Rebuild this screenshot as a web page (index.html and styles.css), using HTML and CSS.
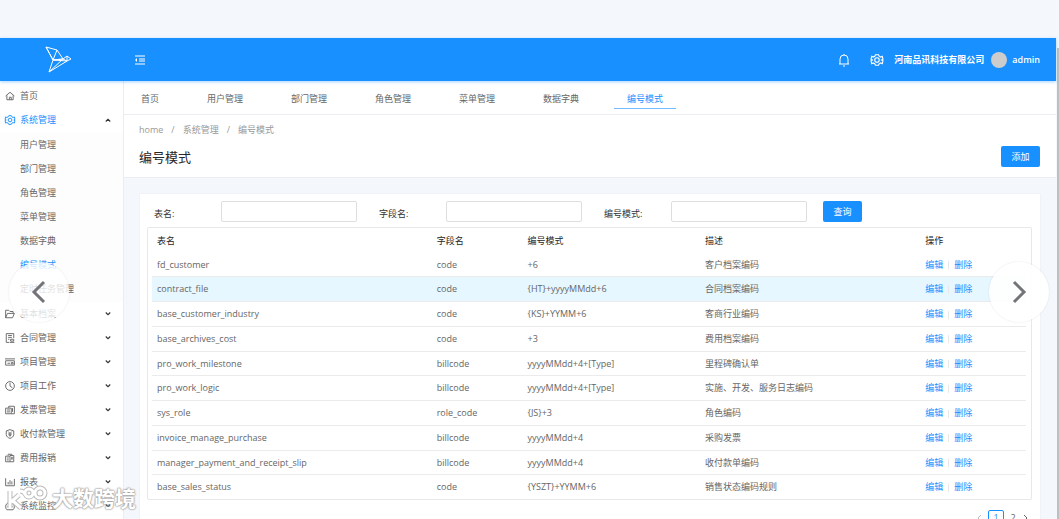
FILE: index.html
```html
<!DOCTYPE html>
<html lang="zh-CN">
<head>
    <meta charset="UTF-8">
    <meta name="viewport" content="width=device-width, initial-scale=1.0">
    <title>编号模式</title>
    <link rel="stylesheet" href="styles.css">
</head>
<body>
    <div class="app">
        <header class="header">
            <a class="logo" href="#" aria-label="home">
                <svg width="27" height="28" viewBox="0 0 27 28"><path d="M1 1l11 3 6 9-10 1zM8 14l10-1-14 13zM12 4L8 14M18 13l4-3 4 3-4 2-18 11M8 14l14 1M18 13l4 2v-5M1 1l7 13"/></svg>
            </a>
            <button class="fold" aria-label="fold">
                <svg width="12" height="12" viewBox="0 0 12 12"><path d="M1 2h10M5 5h6M5 7h6M1 10h10"/><path class="solid" d="M1 6l2-2v4z"/></svg>
            </button>
            <div class="user-bar">
                <button aria-label="notice">
                    <svg width="12" height="14" viewBox="0 0 12 14"><path d="M1 11h10M2 11V6a4 4 0 0 1 8 0v5M6 2V1M5 13h2"/></svg>
                </button>
                <button aria-label="setting">
                    <svg class="gear" width="12" height="12" viewBox="0 0 16 16"><use href="#gear"/></svg>
                </button>
                <span class="company">河南品讯科技有限公司</span>
                <span class="avatar"></span>
                <span class="name">admin</span>
            </div>
        </header>
        <div class="body">
            <nav class="sidebar">
                <a href="#"><svg class="icon" viewBox="0 0 16 16"><path d="M1 8l7-6 7 6M3 7v7h10V7M7 14v-4h3v4"/></svg>首页</a>
                <a class="active" href="#"><svg class="icon" viewBox="0 0 16 16"><g id="gear"><path d="M6 1h4l1 2 2 1 2-1 1 4-2 1 2 1-1 4-2-1-2 1-1 2H6l-1-2-2-1-2 1-1-4 2-1-2-1 1-4 2 1 2-1z"/><circle cx="8" cy="8" r="3"/></g></svg>系统管理<svg class="arrow up" viewBox="0 0 8 8"><path d="M1 2l3 3 3-3"/></svg></a>
                <div class="submenu">
                    <a href="#">用户管理</a>
                    <a href="#">部门管理</a>
                    <a href="#">角色管理</a>
                    <a href="#">菜单管理</a>
                    <a href="#">数据字典</a>
                    <a class="active" href="#">编号模式</a>
                    <a href="#">定时任务管理</a>
                </div>
                <a href="#"><svg class="icon" viewBox="0 0 16 16"><path d="M1 14V2h5l2 2h5v3M1 14h11l3-7H4z"/></svg>基本档案<svg class="arrow" viewBox="0 0 8 8"><path d="M1 2l3 3 3-3"/></svg></a>
                <a href="#"><svg class="icon" viewBox="0 0 16 16"><path d="M14 8V1H2v14h5M5 4h6M5 7h6M5 10h2M9 10h5v3H9zM8 15h7"/></svg>合同管理<svg class="arrow" viewBox="0 0 8 8"><path d="M1 2l3 3 3-3"/></svg></a>
                <a href="#"><svg class="icon" viewBox="0 0 16 16"><path d="M0 3h16M1 6h14M1 6v7h14V6M4 10h4M10 9h3v2h-3z"/></svg>项目管理<svg class="arrow" viewBox="0 0 8 8"><path d="M1 2l3 3 3-3"/></svg></a>
                <a href="#"><svg class="icon" viewBox="0 0 16 16"><circle cx="8" cy="8" r="7"/><path d="M8 3v5l4 3"/></svg>项目工作<svg class="arrow" viewBox="0 0 8 8"><path d="M1 2l3 3 3-3"/></svg></a>
                <a href="#"><svg class="icon" viewBox="0 0 16 16"><path d="M6 5V2h9v12H1V5h9v9M3 8h5M3 11h5M12 5v6"/></svg>发票管理<svg class="arrow" viewBox="0 0 8 8"><path d="M1 2l3 3 3-3"/></svg></a>
                <a href="#"><svg class="icon" viewBox="0 0 16 16"><path d="M8 1l6 2v6c0 3-3 5-6 6-3-1-6-3-6-6V3zM5 4l3 3 3-3M8 7v5M5 8h6M6 10h4"/></svg>收付款管理<svg class="arrow" viewBox="0 0 8 8"><path d="M1 2l3 3 3-3"/></svg></a>
                <a href="#"><svg class="icon" viewBox="0 0 16 16"><path d="M5 4V2h6v2M1 5h7v9H1zM8 4h6v10H8M3 8h3M3 11h3M11 6v5M10 8h3"/></svg>费用报销<svg class="arrow" viewBox="0 0 8 8"><path d="M1 2l3 3 3-3"/></svg></a>
                <a href="#"><svg class="icon" viewBox="0 0 16 16"><path d="M1 2v12h14V3M5 12V8M8 12V5M11 12V7"/></svg>报表<svg class="arrow" viewBox="0 0 8 8"><path d="M1 2l3 3 3-3"/></svg></a>
                <a href="#"><svg class="icon" viewBox="0 0 16 16"><path d="M3 14a7 7 0 1 1 10 0zM8 9l3-4M3 9h1M12 9h1M8 3v1"/></svg>系统监控<svg class="arrow" viewBox="0 0 8 8"><path d="M1 2l3 3 3-3"/></svg></a>
            </nav>
            <main class="content">
                <nav class="tabs">
                    <a href="#">首页</a>
                    <a href="#">用户管理</a>
                    <a href="#">部门管理</a>
                    <a href="#">角色管理</a>
                    <a href="#">菜单管理</a>
                    <a href="#">数据字典</a>
                    <a class="active" href="#">编号模式</a>
                </nav>
                <section class="page-header">
                    <div class="breadcrumb"><a href="#">home</a><span>/</span><a href="#">系统管理</a><span>/</span><a href="#">编号模式</a></div>
                    <div class="title-row">
                        <h1>编号模式</h1>
                        <button class="btn">添加</button>
                    </div>
                </section>
                <section class="card">
                    <form class="search">
                        <div class="field"><label for="table-name">表名:</label><input id="table-name" type="text"></div>
                        <div class="field"><label for="field-name">字段名:</label><input id="field-name" type="text"></div>
                        <div class="field"><label for="code-mode">编号模式:</label><input id="code-mode" type="text"></div>
                        <div class="action"><button class="btn" type="button">查询</button></div>
                    </form>
                    <div class="table-box">
                        <table>
                            <thead>
                                <tr><th class="col-table">表名</th><th class="col-field">字段名</th><th class="col-mode">编号模式</th><th class="col-desc">描述</th><th>操作</th></tr>
                            </thead>
                            <tbody>
                                <tr><td>fd_customer</td><td>code</td><td>+6</td><td>客户档案编码</td><td><a href="#">编辑</a><i></i><a href="#">删除</a></td></tr>
                                <tr class="hover"><td>contract_file</td><td>code</td><td>{HT}+yyyyMMdd+6</td><td>合同档案编码</td><td><a href="#">编辑</a><i></i><a href="#">删除</a></td></tr>
                                <tr><td>base_customer_industry</td><td>code</td><td>{KS}+YYMM+6</td><td>客商行业编码</td><td><a href="#">编辑</a><i></i><a href="#">删除</a></td></tr>
                                <tr><td>base_archives_cost</td><td>code</td><td>+3</td><td>费用档案编码</td><td><a href="#">编辑</a><i></i><a href="#">删除</a></td></tr>
                                <tr><td>pro_work_milestone</td><td>billcode</td><td>yyyyMMdd+4+[Type]</td><td>里程碑确认单</td><td><a href="#">编辑</a><i></i><a href="#">删除</a></td></tr>
                                <tr><td>pro_work_logic</td><td>billcode</td><td>yyyyMMdd+4+[Type]</td><td>实施、开发、服务日志编码</td><td><a href="#">编辑</a><i></i><a href="#">删除</a></td></tr>
                                <tr><td>sys_role</td><td>role_code</td><td>{JS}+3</td><td>角色编码</td><td><a href="#">编辑</a><i></i><a href="#">删除</a></td></tr>
                                <tr><td>invoice_manage_purchase</td><td>billcode</td><td>yyyyMMdd+4</td><td>采购发票</td><td><a href="#">编辑</a><i></i><a href="#">删除</a></td></tr>
                                <tr><td>manager_payment_and_receipt_slip</td><td>billcode</td><td>yyyyMMdd+4</td><td>收付款单编码</td><td><a href="#">编辑</a><i></i><a href="#">删除</a></td></tr>
                                <tr><td>base_sales_status</td><td>code</td><td>{YSZT}+YYMM+6</td><td>销售状态编码规则</td><td><a href="#">编辑</a><i></i><a href="#">删除</a></td></tr>
                            </tbody>
                        </table>
                    </div>
                    <div class="pagination">
                        <button class="disabled" aria-label="prev"><svg width="6" height="8" viewBox="0 0 6 8"><path d="M5 1L2 4l3 3"/></svg></button>
                        <button class="current">1</button>
                        <button>2</button>
                        <button aria-label="next"><svg width="6" height="8" viewBox="0 0 6 8"><path d="M1 1l3 3-3 3"/></svg></button>
                    </div>
                </section>
            </main>
        </div>
    </div>
    <div class="scrollbar"></div>
    <button class="slide prev" aria-label="previous slide"><svg width="16" height="24" viewBox="0 0 16 24"><path d="M13 2L3 12l10 10"/></svg></button>
    <button class="slide next" aria-label="next slide"><svg width="16" height="24" viewBox="0 0 16 24"><path d="M3 2l10 10L3 22"/></svg></button>
    <div class="watermark">
        <svg width="42" height="26" viewBox="0 0 42 26">
            <g class="edge"><path d="M3 6v17M4 17l8-7M6 16l8 7"/><circle cx="22" cy="8" r="4"/><circle cx="33" cy="8" r="5"/><path d="M13 6c2 0 4 1 5 3"/></g>
            <g class="face"><path d="M3 6v17M4 17l8-7M6 16l8 7"/><circle cx="22" cy="8" r="4"/><circle cx="33" cy="8" r="5"/><path d="M13 6c2 0 4 1 5 3"/></g>
        </svg>
        <span>大数跨境</span>
    </div>
</body>
</html>
```
FILE: styles.css
```css
* {
    box-sizing: border-box;
}
body {
    margin: 0;
    height: 100vh;
    overflow: hidden;
    position: relative;
    background: #f4f7fc;
    font-family: "Open Sans", "Noto Sans CJK SC", sans-serif;
    font-size: 9px;
    line-height: 14px;
    color: #666;
}
a {
    color: inherit;
    text-decoration: none;
}
button, input {
    font: inherit;
    padding: 0;
}
button {
    border: none;
    background: none;
    color: inherit;
}
svg {
    display: block;
    fill: none;
    stroke: currentColor;
}
.app {
    display: flex;
    flex-direction: column;
    height: 100%;
    padding-top: 38px;
    margin-right: 3px;
}
.header {
    display: flex;
    align-items: center;
    flex-shrink: 0;
    height: 43px;
    padding-right: 16px;
    background: #1890ff;
    color: #fff;
    box-shadow: 0 1px 3px rgba(24, 144, 255, 0.4);
    z-index: 1;
}
.logo {
    width: 124px;
    padding-left: 45px;
}
.fold {
    margin-left: 10px;
}
.fold .solid {
    fill: currentColor;
    stroke: none;
}
.user-bar {
    display: flex;
    align-items: center;
    margin-left: auto;
    font-weight: 600;
}
.user-bar button {
    margin-right: 21px;
}
.user-bar button + button {
    margin-right: 11px;
}
.gear {
    overflow: visible;
    stroke-width: 1.5;
}
.avatar {
    width: 16px;
    height: 16px;
    margin: 0 5px 0 7px;
    border-radius: 50%;
    background: #ccc;
}
.body {
    display: flex;
    flex: 1;
    min-height: 0;
}
.sidebar {
    width: 124px;
    flex-shrink: 0;
    padding-top: 3px;
    overflow: hidden;
    background: #fff;
    border-right: 1px solid #ebedf0;
}
.sidebar a {
    display: flex;
    align-items: center;
    height: 24px;
    padding: 0 12px 0 5px;
}
.sidebar .active {
    color: #1890ff;
}
.icon {
    width: 10px;
    height: 10px;
    margin-right: 5px;
    overflow: visible;
    stroke-width: 1.5;
}
.arrow {
    width: 6px;
    height: 6px;
    margin-left: auto;
    color: #333;
    stroke-width: 1.5;
}
.arrow.up {
    transform: rotate(180deg);
}
.submenu {
    padding: 1px 0;
    background: #fdfdfd;
}
.submenu a {
    padding-left: 20px;
}
.content {
    flex: 1;
    min-width: 0;
}
.tabs {
    display: flex;
    gap: 22px;
    height: 34px;
    padding: 4px;
    border-bottom: 1px solid #ebedf0;
    background: #fff;
}
.tabs a {
    height: 24px;
    padding: 7px 13px 0;
}
.tabs .active {
    color: #1890ff;
    border-bottom: 1px solid #74bcff;
}
.page-header {
    padding: 8px 16px 10px 15px;
    background: #fff;
    border-bottom: 1px solid #ebedf0;
}
.breadcrumb {
    color: #999;
}
.breadcrumb span {
    margin: 0 8px;
}
.title-row {
    display: flex;
    align-items: center;
    justify-content: space-between;
    margin-top: 9px;
}
h1 {
    margin: 0;
    font-size: 13px;
    line-height: 20px;
    font-weight: 400;
    color: #262626;
}
.btn {
    width: 39px;
    height: 21px;
    border-radius: 2px;
    background: #1890ff;
    color: #fff;
}
.card {
    margin: 16px 16px 0;
    padding-top: 7px;
    background: #fff;
    height: 100%;
    box-shadow: 0 0 1px #d8dce2;
}
.search {
    display: grid;
    grid-template-columns: repeat(4, 1fr);
    margin-bottom: 5px;
}
.field {
    display: flex;
    padding: 0 8px 0 14px;
}
.field label {
    width: 67px;
    padding-top: 6px;
    color: #333;
}
.field input {
    flex: 1;
    min-width: 0;
    height: 21px;
    border: 1px solid #dedede;
    border-radius: 2px;
}
.action {
    padding-left: 8px;
}
.table-box {
    margin: 0 8px 0 7px;
    padding: 0 5px 0 4px;
    border: 1px solid #e8e8e8;
    border-radius: 2px;
}
table {
    width: 100%;
    height: 271px;
    table-layout: fixed;
    border-collapse: collapse;
}
th, td {
    padding: 0 5px;
    text-align: left;
    border-bottom: 1px solid #ebebeb;
}
th {
    height: 25px;
    font-weight: 400;
    color: #262626;
    border-bottom: none;
}
tr:last-child td {
    border-bottom: none;
}
.col-table {
    width: 32%;
}
.col-field {
    width: 10.4%;
}
.col-mode {
    width: 20.3%;
}
.col-desc {
    width: 25.2%;
}
.hover {
    background: #e6f7ff;
}
td a {
    color: #1890ff;
}
td i {
    display: inline-block;
    width: 1px;
    height: 8px;
    margin: 0 5px;
    vertical-align: middle;
    background: #e8e8e8;
}
.pagination {
    display: flex;
    justify-content: flex-end;
    gap: 5px;
    margin: 10px 10px 0 0;
}
.pagination button {
    display: flex;
    align-items: center;
    justify-content: center;
    min-width: 8px;
    height: 15px;
}
.pagination .current {
    width: 16px;
    border: 1px solid #1890ff;
    border-radius: 2px;
    color: #1890ff;
}
.pagination .disabled {
    color: #bbb;
}
/* scrollbar, carousel arrows and watermark lie over the page */
.scrollbar {
    position: absolute;
    top: 48px;
    right: 0;
    bottom: 0;
    width: 2px;
    background: #bfbfbf;
}
.slide {
    position: absolute;
    top: 262px;
    display: flex;
    align-items: center;
    justify-content: center;
    width: 60px;
    height: 60px;
    border-radius: 50%;
    background: rgba(255, 255, 255, 0.8);
    box-shadow: 0 0 2px rgba(0, 0, 0, 0.12);
    color: #737378;
    z-index: 2;
}
.slide svg {
    stroke-width: 3;
}
.prev {
    left: 9px;
}
.next {
    right: 10px;
    background: rgba(255, 255, 255, 0.9);
}
.watermark {
    position: absolute;
    left: 7px;
    bottom: 8px;
    display: flex;
    align-items: center;
    gap: 3px;
    font-size: 21px;
    line-height: 26px;
    font-weight: 700;
    color: #fff;
    text-shadow: 0 0 2px #999, 0 0 2px #999, 0 0 1px #aaa;
    z-index: 3;
}
.watermark .edge {
    stroke: #bbb;
    stroke-width: 5;
}
.watermark .face {
    stroke: #fff;
    stroke-width: 3;
}
```
